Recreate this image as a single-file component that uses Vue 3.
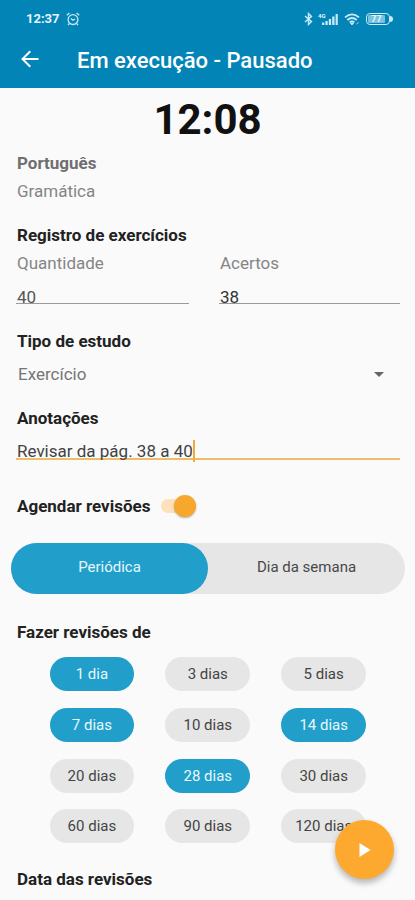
<template>
  <div class="screen">
    <!-- barra de status -->
    <div class="status-bar">
      <span class="status-bar__time">12:37</span>
      <svg class="alarm" width="14" height="14" viewBox="0 0 14 14" fill="none" stroke="#c9ebf7" stroke-width="1.3">
        <circle cx="7" cy="7.6" r="4.9" />
        <path d="M.8 3.2 3.4 1M13.2 3.2 10.6 1M3.4 11.5 2 13.2M10.6 11.5 12 13.2M4.8 6.4 7 8.2 9.2 7" />
      </svg>
      <div class="status-bar__icons">
        <svg width="9" height="14" viewBox="0 0 9 14" fill="none" stroke="#c9ebf7" stroke-width="1.4">
          <path d="M1 4 7.5 9.6 4.5 12.5V1.5L7.5 4.4 1 10" />
        </svg>
        <div class="signal">
          <span class="signal__net">4G</span>
          <svg width="20" height="14" viewBox="0 0 20 14" fill="#c9ebf7">
            <path d="M4 10.5h2.3V13H4zM7.4 9h2.3v4H7.4zM10.8 7h2.3v6h-2.3zM14.2 4.5h2.3V13h-2.3zM17.6 2h2.2v11h-2.2z" />
          </svg>
        </div>
        <svg class="wifi" width="17" height="14" viewBox="0 0 17 14" fill="none" stroke="#c9ebf7" stroke-width="1.8">
          <path d="M1 5.4Q8 -.6 15 5.4M3.3 8Q8 4 12.7 8M5.6 10.4Q8 8.4 10.4 10.4" />
          <path d="M6.5 11h3L8 13zM12.5 12l2-1.5" fill="#c9ebf7" stroke-width=".9" />
        </svg>
        <div class="battery"><span class="battery__level">77</span></div>
      </div>
    </div>

    <header class="app-bar">
      <svg width="20" height="20" viewBox="0 0 20 20" fill="none" stroke="#fff" stroke-width="2">
        <path d="M18.5 10H3M10.3 2.2 2.5 10l7.8 7.8" />
      </svg>
      <h1 class="app-bar__title">Em execução - Pausado</h1>
    </header>

    <main class="content">
      <div class="timer">12:08</div>

      <div class="subject">Português</div>
      <div class="topic">Gramática</div>

      <h2 class="heading heading--exercises">Registro de exercícios</h2>
      <div class="fields">
        <div class="field field--left">
          <label class="field__label">Quantidade</label>
          <div class="field__value">40</div>
        </div>
        <div class="field field--right">
          <label class="field__label">Acertos</label>
          <div class="field__value field__value--dark">38</div>
        </div>
      </div>

      <h2 class="heading heading--type">Tipo de estudo</h2>
      <div class="select">
        <span>Exercício</span>
        <span class="select__arrow"></span>
      </div>

      <h2 class="heading heading--notes">Anotações</h2>
      <div class="notes"><span class="notes__text">Revisar da pág. 38 a 40</span><span class="notes__caret"></span></div>

      <div class="schedule">
        <h2 class="heading">Agendar revisões</h2>
        <button class="switch" :class="{ 'switch--on': scheduled }" aria-label="Agendar revisões" @click="scheduled = !scheduled">
          <span class="switch__thumb"></span>
        </button>
      </div>

      <div class="segmented">
        <button
          v-for="mode in modes"
          :key="mode"
          class="segmented__item"
          :class="{ 'segmented__item--active': mode === activeMode }"
          @click="activeMode = mode"
        >{{ mode }}</button>
      </div>

      <h2 class="heading heading--every">Fazer revisões de</h2>
      <div class="chips">
        <button
          v-for="day in days"
          :key="day"
          class="chip"
          :class="{ 'chip--active': selected.includes(day) }"
          @click="toggleDay(day)"
        >{{ day }} {{ day === 1 ? 'dia' : 'dias' }}</button>
      </div>

      <h2 class="heading heading--dates">Data das revisões</h2>
    </main>

    <!-- botão flutuante: retomar -->
    <button class="fab" aria-label="Retomar">
      <svg width="12" height="14" viewBox="0 0 12 14" fill="#fff"><path d="M.5 0 11.5 7 .5 14z" /></svg>
    </button>
  </div>
</template>

<script setup>
import { ref } from 'vue'

const modes = ['Periódica', 'Dia da semana']
const activeMode = ref('Periódica')
const scheduled = ref(true)

const days = [1, 3, 5, 7, 10, 14, 20, 28, 30, 60, 90, 120]
const selected = ref([1, 7, 14, 28])

function toggleDay(day) {
  selected.value = selected.value.includes(day)
    ? selected.value.filter((d) => d !== day)
    : [...selected.value, day]
}
</script>

<style>
body {
  margin: 0;
  background: #fafafa;
}
</style>

<style scoped>
.screen {
  position: relative;
  width: 415px;
  height: 900px;
  overflow: hidden;
  background: #fafafa;
  font-family: Roboto, "Liberation Sans", sans-serif;
  font-size: 17px;
  line-height: 20px;
  color: #222;
}

button {
  border: none;
  padding: 0;
  font: inherit;
  cursor: pointer;
}

/* ---- topo ---- */
.status-bar {
  display: flex;
  align-items: center;
  box-sizing: border-box;
  height: 38px;
  padding: 0 23px 0 26px;
  background: #0284b7;
  color: #e3f6fc;
}

.status-bar__time {
  width: 40px;
  font-size: 13px;
  font-weight: 700;
}

.status-bar__icons {
  display: flex;
  align-items: center;
  margin-left: auto;
}

.signal {
  display: flex;
  position: relative;
  margin-left: 5px;
}

.signal__net {
  position: absolute;
  top: 1px;
  left: 0;
  font-size: 6px;
  font-weight: 700;
  line-height: 6px;
}

.wifi {
  margin-left: 6px;
}

.battery {
  position: relative;
  box-sizing: border-box;
  width: 24px;
  height: 12px;
  margin: 0 2px 0 5px;
  padding: 1px;
  border: 1.5px solid #c9ebf7;
  border-radius: 4px;
}

.battery::after {
  content: '';
  position: absolute;
  top: 2px;
  right: -4px;
  width: 3px;
  height: 6px;
  border-radius: 0 3px 3px 0;
  background: #c9ebf7;
}

.battery__level {
  display: block;
  width: 17px;
  height: 8px;
  border-radius: 1px;
  background: #79c1dd;
  color: #e9f9fe;
  font-size: 9px;
  font-weight: 700;
  line-height: 8px;
  text-align: center;
}

.app-bar {
  display: flex;
  align-items: center;
  height: 50px;
  padding: 0 20px;
  background: #0284b7;
}

.app-bar svg {
  margin-bottom: 8px;
}

.app-bar__title {
  margin: 0 0 5px 37px;
  color: #fff;
  font-size: 22px;
  font-weight: 500;
  line-height: 28px;
}

/* ---- conteúdo ---- */
.content {
  padding: 8px 15px 0 17px;
}

.timer {
  height: 57px;
  margin-right: 2px;
  color: #111;
  font-size: 42px;
  font-weight: 700;
  line-height: 48px;
  text-align: center;
}

.subject {
  color: #6f6f6f;
  font-weight: 700;
}

.topic {
  margin-top: 8px;
  color: #858585;
}

.heading {
  margin: 0;
  color: #222;
  font-size: 17px;
  font-weight: 700;
  line-height: 20px;
}

.heading--exercises {
  margin-top: 24px;
}

.fields {
  display: flex;
  justify-content: space-between;
  margin: 8px 0 0 -1px;
}

.field--left {
  width: 173px;
}

.field--right {
  width: 181px;
}

.field__label {
  display: block;
  padding-left: 1px;
  color: #858585;
}

.field__value {
  height: 16px;
  margin-top: 14px;
  padding-left: 1px;
  border-bottom: 1px solid #999;
  color: #555;
}

.field__value--dark {
  color: #333;
}

.heading--type {
  margin-top: 27px;
}

.select {
  display: flex;
  align-items: center;
  justify-content: space-between;
  margin-top: 13px;
  padding: 0 16px 0 1px;
  color: #757575;
}

.select__arrow {
  border: 5px solid transparent;
  border-top-color: #666;
  border-bottom: 0;
}

.heading--notes {
  margin-top: 24px;
}

.notes {
  display: flex;
  height: 17px;
  margin: 13px 0 0 -1px;
  padding-left: 1px;
  border-bottom: 2px solid #efbd68;
  color: #424242;
}

.notes__caret {
  width: 2px;
  height: 22px;
  margin-top: -1px;
  background: #f4aa36;
}

.schedule {
  display: flex;
  align-items: center;
  margin-top: 36px;
}

.switch {
  display: flex;
  align-items: center;
  width: 35px;
  height: 14px;
  margin-left: 11px;
  border-radius: 7px;
  background: #ddd;
}

.switch--on {
  justify-content: flex-end;
  background: #fde2b9;
}

.switch__thumb {
  width: 22px;
  height: 22px;
  border-radius: 50%;
  background: #f8a72e;
  box-shadow: 0 1px 2px rgba(0, 0, 0, 0.3);
}

.segmented {
  display: flex;
  height: 51px;
  margin: 27px -5px 0 -6px;
  border-radius: 26px;
  background: #e6e6e6;
}

.segmented__item {
  flex: 1;
  padding-bottom: 4px;
  border-radius: 26px;
  background: transparent;
  color: #484848;
  font-size: 15px;
}

.segmented__item--active {
  background: #219fca;
  color: #e6f8fd;
}

.heading--every {
  margin-top: 28px;
}

.chips {
  display: grid;
  grid-template-columns: repeat(3, 84.6px);
  gap: 16.8px 31.3px;
  margin: 15px 0 0 32.6px;
}

.chip {
  height: 34px;
  border-radius: 17px;
  background: #e6e6e6;
  color: #444;
  font-size: 15px;
}

.chip--active {
  background: #219fca;
  color: #e6f8fd;
}

.heading--dates {
  margin-top: 26px;
}

.fab {
  position: absolute;
  right: 21px;
  bottom: 21px;
  display: flex;
  align-items: center;
  justify-content: center;
  width: 59px;
  height: 59px;
  border-radius: 50%;
  background: #fda92f;
  box-shadow: 0 4px 6px rgba(0, 0, 0, 0.28);
}
</style>
